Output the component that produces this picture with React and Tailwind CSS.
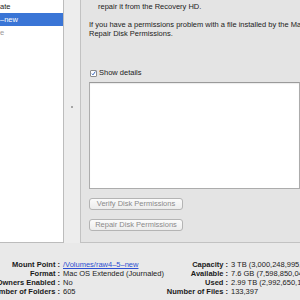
import React from "react";

const left = [
  ["Mount Point :", "/Volumes/raw4–5–new", true],
  ["Format :", "Mac OS Extended (Journaled)"],
  ["Owners Enabled :", "No"],
  ["Number of Folders :", "605"],
];

const right = [
  ["Capacity :", "3 TB (3,000,248,995,840 Bytes)"],
  ["Available :", "7.6 GB (7,598,850,048 Bytes)"],
  ["Used :", "2.99 TB (2,992,650,145,792 Bytes)"],
  ["Number of Files :", "133,397"],
];

function Label({ children, w }) {
  return (
    <div className={`flex justify-end shrink-0 ${w}`}>
      <span className="whitespace-nowrap font-bold text-[#1a1a1a]">{children}</span>
    </div>
  );
}

function DiskButton({ children }) {
  return (
    <div className="w-[94px] h-[12px] rounded-[3px] border border-[#b4b4b4] bg-gradient-to-b from-[#fbfbfb] to-[#ececec] flex items-center justify-center text-[#8a8a8a] whitespace-nowrap leading-none">
      {children}
    </div>
  );
}

export default function App() {
  return (
    <div className="w-[300px] h-[300px] overflow-hidden bg-[#e9e9e9] font-['Liberation_Sans',Arial,sans-serif] text-[7.5px] text-[#222]">
      <div className="flex h-[243px]">
        <aside className="w-[64px] shrink-0 bg-white border-r border-b border-[#bcbcbc] leading-[13px]">
          <div className="h-[13px] whitespace-nowrap">ate</div>
          <div className="h-[13px] bg-[#3a75d6] text-white whitespace-nowrap">–new</div>
          <div className="h-[13px] text-[#9a9a9a] whitespace-nowrap">e</div>
        </aside>

        <div className="w-[16px] shrink-0 bg-[#ededed] flex justify-center pt-[106px]">
          <div className="w-[2px] h-[2px] rounded-full bg-[#8c8c8c]" />
        </div>

        <main className="flex-1 min-w-0 overflow-hidden bg-[#e4e4e4] border-l border-b border-[#c2c2c2] pl-[8px] pt-[1.5px]">
          <p className="pl-[9px] leading-[9px] whitespace-nowrap">repair it from the Recovery HD.</p>
          <p className="mt-[9px] leading-[9.3px] whitespace-nowrap">
            If you have a permissions problem with a file installed by the Mac OS X installer, click
            <br />
            Repair Disk Permissions.
          </p>

          <label className="mt-[31px] h-[8px] flex items-center gap-[2px] whitespace-nowrap">
            <span className="w-[7px] h-[7px] ml-[1px] border border-[#8d8d8d] bg-white rounded-[1px] flex items-center justify-center">
              <svg viewBox="0 0 8 8" className="w-[7px] h-[7px]">
                <path d="M1.3 4.2 L3.2 6.2 L7 0.8" fill="none" stroke="#2f5fb8" strokeWidth="1.5" />
              </svg>
            </span>
            Show details
          </label>

          <div className="mt-[5px] h-[107px] bg-white border border-[#acacac] border-t-[#9a9a9a] shadow-[inset_0_1px_1px_rgba(0,0,0,0.08)]" />

          <div className="mt-[9px] flex flex-col gap-[9px]">
            <DiskButton>Verify Disk Permissions</DiskButton>
            <DiskButton>Repair Disk Permissions</DiskButton>
          </div>
        </main>
      </div>

      <div className="pt-[16.5px] leading-[9px]">
        {left.map(([l, v, link], i) => (
          <div key={l} className="flex h-[9px]">
            <Label w="w-[60px]">{l}</Label>
            <div className={`ml-[3px] w-[104px] shrink-0 whitespace-nowrap ${link ? "text-[#2d4fd1] underline" : ""}`}>
              {v}
            </div>
            <Label w="w-[61px]">{right[i][0]}</Label>
            <div className="ml-[3px] whitespace-nowrap">{right[i][1]}</div>
          </div>
        ))}
      </div>
    </div>
  );
}
